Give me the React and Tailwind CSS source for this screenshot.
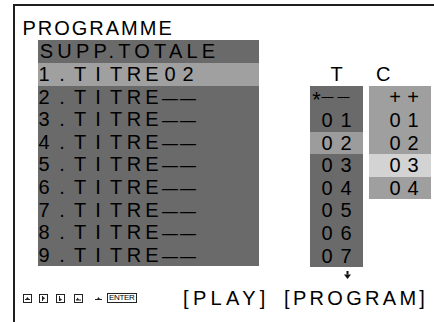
import React from "react";

const listRows = [
  "1.TITRE02",
  "2.TITRE--",
  "3.TITRE--",
  "4.TITRE--",
  "5.TITRE--",
  "6.TITRE--",
  "7.TITRE--",
  "8.TITRE--",
  "9.TITRE--",
];

const trackRows = ["01", "02", "03", "04", "05", "06", "07"];
const chapterRows = ["++", "01", "02", "03", "04"];

// one char per fixed cell, like the on-screen display font
const ListCell = ({ ch }) =>
  ch === "-" ? (
    <span className="inline-block w-[18px] text-center text-[16px] text-black">—</span>
  ) : (
    <span className="inline-block w-[18px] text-center text-black">{ch}</span>
  );

const KeyBox = ({ children }) => (
  <svg width="9" height="9" viewBox="0 0 9 9" className="shrink-0">
    <rect x="0.5" y="0.5" width="8" height="8" fill="none" stroke="#222" strokeWidth="1" />
    {children}
  </svg>
);

const App = () => {
  return (
    <div className="w-[434px] h-[322px] bg-white overflow-hidden font-['Liberation_Sans',Arial,sans-serif] text-black">
      <div className="ml-[13px] mt-[4px] h-[318px] border-l-2 border-t-2 border-[#1e1e1e] flex flex-col">
        {/* TITLE */}
        <div className="mt-[10.4px] pl-[7.4px] text-[20px] leading-[24px] tracking-[2px]">
          PROGRAMME
        </div>

        {/* BODY */}
        <div className="flex items-start h-[246px] text-[20px]">
          {/* program list */}
          <div className="ml-[23px] w-[221px] bg-[#6a6a6a]">
            <div className="h-[22.6px] leading-[22.6px] pl-[1.8px] tracking-[4.2px] whitespace-nowrap text-black">
              SUPP.TOTALE
            </div>
            {listRows.map((row, i) => (
              <div
                key={row}
                className={`h-[22.6px] leading-[22.6px] whitespace-nowrap ${
                  i === 0 ? "bg-[#a0a0a0]" : ""
                }`}
              >
                <div className="ml-[-3px]">
                  {row.split("").map((ch, j) => (
                    <ListCell key={j} ch={ch} />
                  ))}
                </div>
              </div>
            ))}
          </div>

          {/* T / C columns */}
          <div className="ml-[51px] pt-[22px] flex flex-col">
            <div className="flex gap-[6px] h-[24px] leading-[24px]">
              <div className="w-[53px] text-center">T</div>
              <div className="w-[62px] pl-[7px]">C</div>
            </div>
            <div className="flex items-start gap-[6px]">
              <div className="flex flex-col">
                <div className="w-[53px] bg-[#6a6a6a] text-black">
                  <div className="h-[22.6px] leading-[22.6px] flex pl-[2px]">
                    <span className="w-[9px] text-center text-[22px] relative top-[3px]">*</span>
                    <span className="w-[13px] text-center text-[12px]">—</span>
                    <span className="w-[3px]" />
                    <span className="w-[13px] text-center text-[12px]">—</span>
                  </div>
                  {trackRows.map((row) => (
                    <div
                      key={row}
                      className={`h-[22.6px] leading-[22.6px] flex justify-center ${
                        row === "02" ? "bg-[#9c9c9c]" : ""
                      }`}
                    >
                      <span className="w-[19px] text-center">{row[0]}</span>
                      <span className="w-[19px] text-center">{row[1]}</span>
                    </div>
                  ))}
                </div>
                <svg width="7" height="8" viewBox="0 0 7 8" className="ml-[33.7px] mt-[3.5px]">
                  <rect x="2.5" y="0" width="2" height="3.5" fill="#111" />
                  <path d="M0 3.5 L7 3.5 L3.5 8 Z" fill="#111" />
                </svg>
              </div>
              <div className="w-[62px] bg-[#9f9f9f] text-black">
                {chapterRows.map((row) => (
                  <div
                    key={row}
                    className={`h-[22.6px] leading-[22.6px] flex pl-[17px] ${
                      row === "03" ? "bg-[#d3d3d3]" : ""
                    }`}
                  >
                    <span className="w-[18px] text-center">{row[0]}</span>
                    <span className="w-[18px] text-center">{row[1]}</span>
                  </div>
                ))}
              </div>
            </div>
          </div>
        </div>

        {/* FOOTER */}
        <div className="flex items-center h-[24px] text-[20px] leading-[24px] whitespace-nowrap">
          <div className="ml-[7.7px] flex items-center">
            <KeyBox>
              <path d="M2 5.5 H7" stroke="#222" strokeWidth="1" />
              <path d="M3 5 L4.5 3 L6 5 Z" fill="#222" />
            </KeyBox>
            <span className="ml-[7.6px] flex">
              <KeyBox>
                <path d="M3.5 2 V7" stroke="#222" strokeWidth="1" />
                <path d="M4 2.8 L6.2 4.3 L4 5.8 Z" fill="#222" />
              </KeyBox>
            </span>
            <span className="ml-[7.7px] flex">
              <KeyBox>
                <path d="M3.5 2 V7" stroke="#222" strokeWidth="1" />
                <path d="M4 4.2 L6.2 5.6 L4 7 Z" fill="#222" />
              </KeyBox>
            </span>
            <span className="ml-[9px] flex">
              <KeyBox>
                <path d="M2 6 H7" stroke="#222" strokeWidth="1" />
                <path d="M2.2 6 L3.6 3.4 L5 6 Z" fill="#222" />
              </KeyBox>
            </span>
            <svg width="7" height="6" viewBox="0 0 7 6" className="ml-[11.7px]">
              <path d="M0 4.5 H7" stroke="#222" strokeWidth="1" />
              <path d="M2 4.2 L3.5 2 L5 4.2 Z" fill="#222" />
            </svg>
            <span className="ml-[5.3px] border border-[#222] text-[8px] leading-[8px] px-[1px] h-[10px] flex items-center tracking-[-0.3px]">
              ENTER
            </span>
          </div>
          <div className="ml-[46.5px] w-[101px] tracking-[4.3px]">[PLAY]</div>
          <div className="tracking-[3.3px]">[PROGRAM]</div>
        </div>
      </div>
    </div>
  );
};

export default App;
